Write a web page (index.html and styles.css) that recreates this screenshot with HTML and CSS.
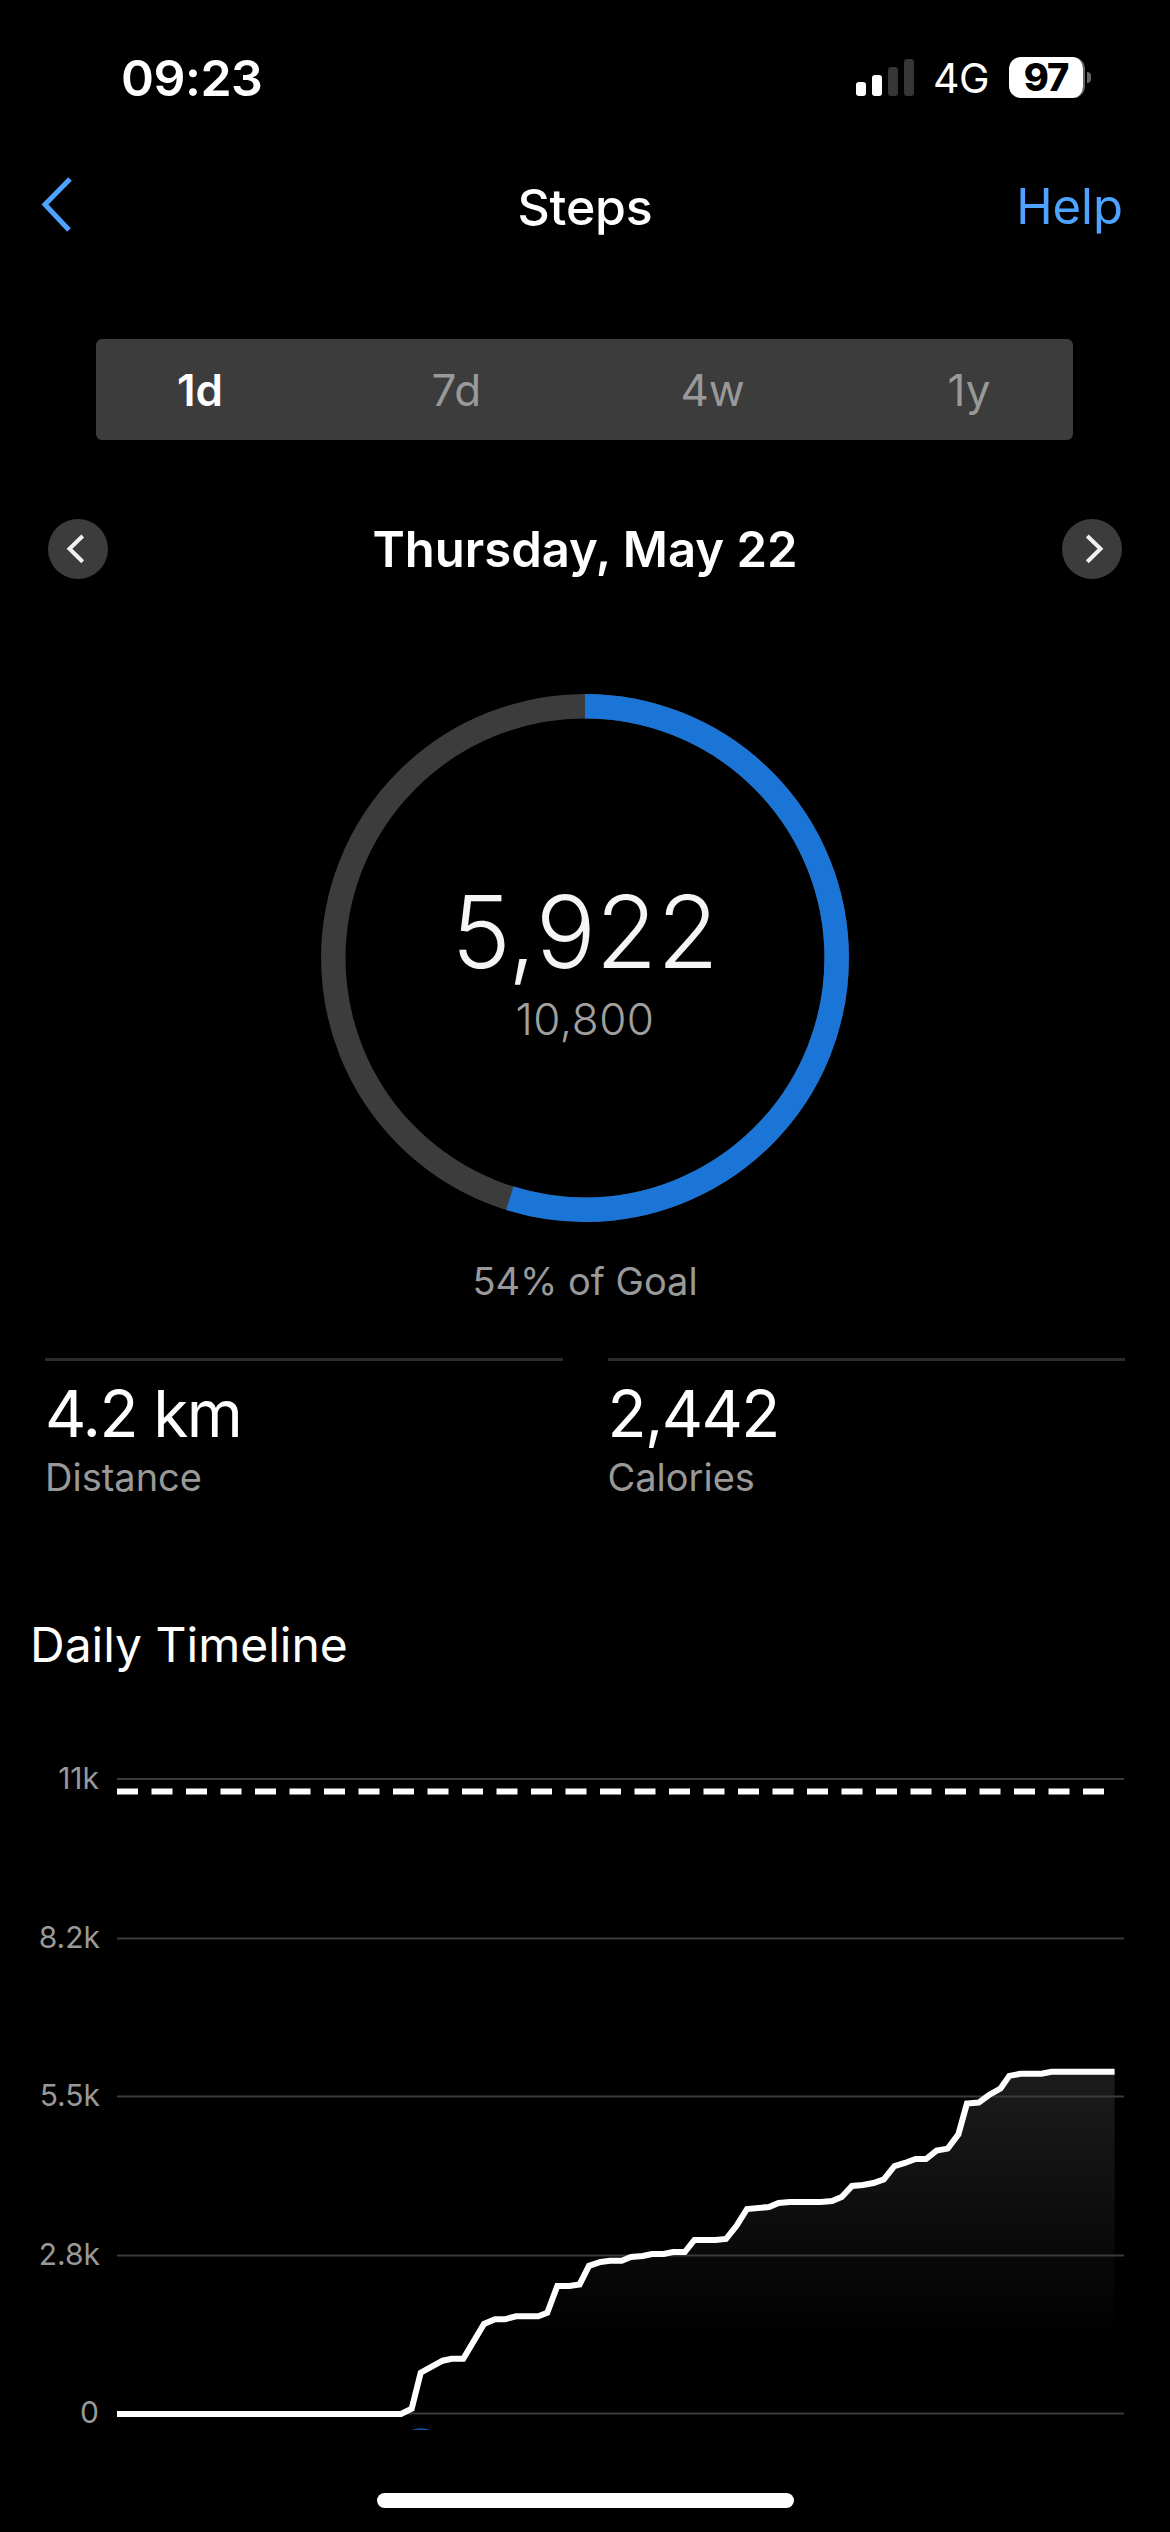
FILE: index.html
```html
<!doctype html>
<html>

<head>
	<meta charset=utf-8>
	<title>Steps</title>
	<meta name=viewport content="width=device-width, initial-scale=1">
	<link rel="stylesheet" href="styles.css">
</head>

<body>
	<div class="status">
		<span class="time">09:23</span>
		<div class="status-right">
			<div class="signal">
				<i class="bar bar1"></i>
				<i class="bar bar2"></i>
				<i class="bar bar3 off"></i>
				<i class="bar bar4 off"></i>
			</div>
			<span class="net">4G</span>
			<div class="battery">97</div>
			<i class="battery-nub"></i>
		</div>
	</div>

	<header class="nav">
		<svg class="nav-back" width="32" height="56" viewBox="0 0 32 56">
			<path d="M29 2 L4 27.5 L28 53" />
		</svg>
		<h1 class="nav-title">Steps</h1>
		<a class="nav-help">Help</a>
	</header>

	<div class="tabs">
		<span class="tab active">1d</span>
		<span class="tab">7d</span>
		<span class="tab">4w</span>
		<span class="tab">1y</span>
	</div>

	<div class="date-row">
		<button class="round-btn">
			<svg width="60" height="60" viewBox="0 0 60 60"><path d="M34.7 17 L21.5 29.8 L34.7 42.7" /></svg>
		</button>
		<h2 class="date">Thursday, May 22</h2>
		<button class="round-btn">
			<svg width="60" height="60" viewBox="0 0 60 60"><path d="M25.3 17 L38.5 29.8 L25.3 42.7" /></svg>
		</button>
	</div>

	<div class="ring">
		<svg class="ring-svg" width="528" height="528" viewBox="0 0 528 528">
			<circle class="ring-track" cx="264" cy="264" r="251.7" />
			<circle class="ring-value" cx="264" cy="264" r="251.7" pathLength="100" stroke-dasharray="54.83 100" transform="rotate(-90 264 264)" />
		</svg>
		<div class="ring-text">
			<div class="ring-count">5,922</div>
			<div class="ring-goal">10,800</div>
		</div>
	</div>
	<p class="goal-note">54% of Goal</p>

	<div class="stats">
		<div class="stat">
			<div class="stat-value">4.2 km</div>
			<div class="stat-label">Distance</div>
		</div>
		<div class="stat">
			<div class="stat-value">2,442</div>
			<div class="stat-label">Calories</div>
		</div>
	</div>

	<h2 class="section-title">Daily Timeline</h2>

	<svg class="chart" width="1170" height="680" viewBox="0 1760 1170 680">
		<defs>
			<linearGradient id="area" x1="0" y1="2072" x2="0" y2="2340" gradientUnits="userSpaceOnUse">
				<stop offset="0" stop-color="#fff" stop-opacity=".11" />
				<stop offset="1" stop-color="#fff" stop-opacity="0" />
			</linearGradient>
		</defs>
		<path class="area" d="M401 2414 L411.7 2408.7 L420.7 2372.7 L442.7 2360.7 L451.7 2358.7 L463.3 2358.7 L484 2324 L495 2319.3 L505 2319.3 L516 2316.3 L538.3 2316.3 L547.3 2312.7 L557.3 2286 L569.3 2286 L579.6 2284.4 L589 2265.8 L600.6 2262 L610 2260.7 L621.7 2260.7 L631 2257 L642.7 2256 L652 2254 L663.8 2254 L673 2252 L684.8 2252 L694.4 2240 L715.4 2240 L726 2239 L736.5 2225.8 L747 2209 L769 2207 L778.6 2203 L790 2202 L820.7 2202 L832 2201 L841.7 2197 L852 2186 L862.8 2185 L873.5 2183 L883.8 2179.4 L894.5 2166 L904.9 2163 L915.6 2159 L926 2159 L936.6 2150.6 L947.7 2148.6 L958.4 2134.4 L966.9 2103.6 L978.7 2102.6 L989 2095 L1000.5 2088.5 L1009.3 2075.9 L1020.4 2073.8 L1041.5 2073.8 L1051.4 2071.8 L1114.6 2071.8 L1114.6 2414 Z" />

		<line class="grid" x1="117" y1="1779" x2="1124" y2="1779" />
		<line class="grid" x1="117" y1="1938.5" x2="1124" y2="1938.5" />
		<line class="grid" x1="117" y1="2096.5" x2="1124" y2="2096.5" />
		<line class="grid" x1="117" y1="2255.5" x2="1124" y2="2255.5" />
		<line class="grid" x1="117" y1="2413.5" x2="1124" y2="2413.5" />

		<text class="axis" x="99" y="1789">11k</text>
		<text class="axis" x="100" y="1948">8.2k</text>
		<text class="axis" x="100" y="2106">5.5k</text>
		<text class="axis" x="100" y="2265">2.8k</text>
		<text class="axis" x="99" y="2423">0</text>

		<line class="goal-line" x1="117" y1="1791.5" x2="1104" y2="1791.5" />
		<polyline class="steps-line" points="117,2414 401,2414 411.7,2408.7 420.7,2372.7 442.7,2360.7 451.7,2358.7 463.3,2358.7 484,2324 495,2319.3 505,2319.3 516,2316.3 538.3,2316.3 547.3,2312.7 557.3,2286 569.3,2286 579.6,2284.4 589,2265.8 600.6,2262 610,2260.7 621.7,2260.7 631,2257 642.7,2256 652,2254 663.8,2254 673,2252 684.8,2252 694.4,2240 715.4,2240 726,2239 736.5,2225.8 747,2209 769,2207 778.6,2203 790,2202 820.7,2202 832,2201 841.7,2197 852,2186 862.8,2185 873.5,2183 883.8,2179.4 894.5,2166 904.9,2163 915.6,2159 926,2159 936.6,2150.6 947.7,2148.6 958.4,2134.4 966.9,2103.6 978.7,2102.6 989,2095 1000.5,2088.5 1009.3,2075.9 1020.4,2073.8 1041.5,2073.8 1051.4,2071.8 1114.6,2071.8" />
		<path class="blip" d="M411 2430 Q421 2426.5 431 2430 Z" />
	</svg>

	<div class="home-bar"></div>
</body>
</html>
```

FILE: styles.css
```css
html, body{
	margin: 0; padding: 0;
	width: 1170px;
	height: 2532px;
	overflow: hidden;
	background-color: #000;
	color: #fff;
	font-family: Inter, "Liberation Sans", sans-serif;
}

h1, h2, p{
	margin: 0;
	font-weight: normal;
}

/* status bar */
.status{
	height: 155px;
	padding: 0 79px 0 121px;
	display: flex;
	justify-content: space-between;
	align-items: center;
}

.time{
	font-size: 50px;
	font-weight: 600;
	letter-spacing: -.5px;
}

.status-right{
	display: flex;
	align-items: center;
}

.signal{
	display: flex;
	align-items: flex-end;
	gap: 6px;
	height: 37px;
}

.bar{
	display: block;
	width: 10px;
	background-color: #fff;
	border-radius: 3px;
}

.bar.off{
	background-color: #363636;
}

.bar1{ height: 14px; }
.bar2{ height: 21px; }
.bar3{ height: 29px; }
.bar4{ height: 37px; }

.net{
	margin-left: 19px;
	font-size: 41px;
	letter-spacing: -.5px;
}

.battery{
	margin-left: 20px;
	width: 76px;
	height: 41px;
	box-sizing: border-box;
	border-radius: 12px;
	border-right: 2px solid #666;
	background-color: #fff;
	color: #000;
	font-size: 38px;
	font-weight: 800;
	line-height: 41px;
	text-align: center;
	letter-spacing: -1px;
}

.battery-nub{
	display: block;
	width: 4px;
	height: 11px;
	margin-left: 2px;
	background-color: #666;
	border-radius: 0 4px 4px 0;
}

/* nav */
.nav{
	height: 100px;
	padding: 0 45px;
	display: grid;
	grid-template-columns: 1fr auto 1fr;
	align-items: center;
}

.nav-back{
	margin-left: -4px;
}

.nav-back path{
	fill: none;
	stroke: #4da3ff;
	stroke-width: 5;
}

.nav-title{
	padding-top: 3px;
	font-size: 50px;
	font-weight: 500;
	letter-spacing: -.2px;
}

.nav-help{
	justify-self: end;
	padding-top: 3px;
	margin-right: 2px;
	font-size: 49px;
	color: #4da3ff;
}

/* 1d 7d 4w 1y */
.tabs{
	margin: 84px 97px 0 96px;
	height: 101px;
	display: flex;
	justify-content: space-between;
	align-items: center;
	background-color: #3c3c3c;
	border-radius: 6px;
}

.tab{
	width: 208px;
	text-align: center;
	font-size: 44px;
	color: #999;
}

.tab.active{
	color: #fff;
	font-weight: 600;
}

/* date */
.date-row{
	margin-top: 79px;
	padding: 0 48px;
	height: 60px;
	display: flex;
	justify-content: space-between;
	align-items: center;
}

.round-btn{
	width: 60px;
	height: 60px;
	padding: 0;
	border: 0;
	border-radius: 50%;
	background-color: #3c3c3c;
}

.round-btn svg{
	display: block;
}

.round-btn path{
	fill: none;
	stroke: #f0f0f0;
	stroke-width: 4;
}

.date{
	font-size: 49px;
	font-weight: 600;
}

/* ring */
.ring{
	margin: 115px auto 0;
	width: 528px;
	height: 528px;
	display: grid;
	justify-items: center;
	align-items: center;
}

.ring-svg, .ring-text{
	grid-area: 1 / 1;
}

.ring-track, .ring-value{
	fill: none;
	stroke-width: 24.5;
}

.ring-track{
	stroke: #3c3c3c;
}

.ring-value{
	stroke: #1a75d6;
}

.ring-text{
	padding-top: 6px;
	text-align: center;
}

.ring-count{
	font-size: 100px;
	font-weight: 300;
	line-height: 108px;
	color: #f5f5f5;
}

.ring-goal{
	margin-top: 8px;
	font-size: 44px;
	font-weight: 300;
	line-height: 50px;
	letter-spacing: .5px;
	color: #a0a0a0;
}

.goal-note{
	margin-top: 36px;
	font-size: 38px;
	line-height: 46px;
	text-align: center;
	color: #999;
}

/* distance / calories */
.stats{
	margin-top: 54px;
	padding: 0 45px;
	display: flex;
	gap: 45px;
}

.stat{
	flex: 1;
	border-top: 3px solid #2c2c2c;
	padding-top: 15px;
}

.stat-value{
	font-size: 64px;
	line-height: 76px;
	letter-spacing: -1.6px;
}

.stat-label{
	margin-top: 2px;
	font-size: 38px;
	line-height: 46px;
	color: #999;
}

.section-title{
	margin: 116px 0 0 30px;
	font-size: 48px;
	line-height: 58px;
}

/* chart */
.chart{
	display: block;
	margin-top: 86px;
}

.area{
	fill: url(#area);
}

.grid{
	stroke: #3a3a3a;
	stroke-width: 2;
}

.axis{
	fill: #999;
	font-size: 30px;
	text-anchor: end;
}

.goal-line{
	stroke: #fff;
	stroke-width: 6;
	stroke-dasharray: 21 13.5;
}

.steps-line{
	fill: none;
	stroke: #fff;
	stroke-width: 6;
}

.blip{
	fill: #0a4fa8;
}

.home-bar{
	margin: 53px auto 0;
	width: 417px;
	height: 15px;
	border-radius: 8px;
	background-color: #fff;
}
```
